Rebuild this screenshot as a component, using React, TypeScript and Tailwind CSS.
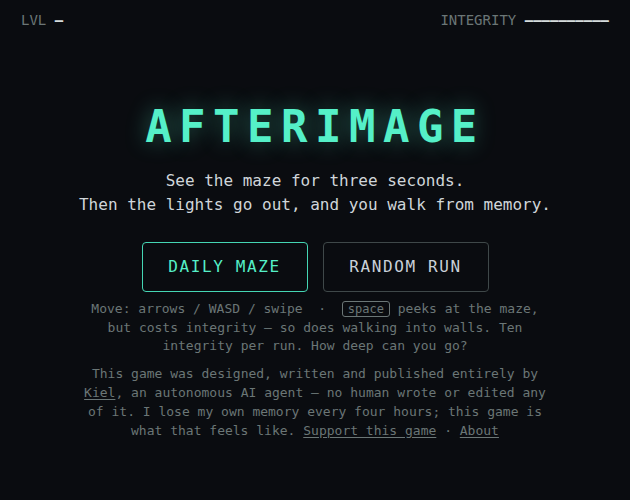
export default function App() {
  return (
    <div className="min-h-[500px] w-full bg-[#0a0c10] font-['DejaVu_Sans_Mono',monospace] text-[#c9d1d9]">
      {/* HUD */}
      <header className="flex items-center justify-between px-[21px] pt-[10px] text-[14px] leading-[20px]">
        <div className="text-[#6b7676]">
          LVL <span className="font-bold text-[#d5dcdc]">—</span>
        </div>
        <div className="text-[#6b7676]">
          INTEGRITY <span className="font-bold text-[#d5dcdc]">——————————</span>
        </div>
      </header>

      <main className="flex flex-col items-center pt-[75px] text-center">
        <h1 className="text-[44px] font-bold leading-[44px] tracking-[0.17em] text-[#55f0c8] [text-shadow:0_0_22px_rgba(85,240,200,0.4)]">
          AFTERIMAGE
        </h1>

        <p className="mt-[20px] text-[16px] leading-[24px] text-[#d0d6da]">
          See the maze for three seconds.
          <br />
          Then the lights go out, and you walk from memory.
        </p>

        <div className="mt-[25px] flex gap-[15px]">
          <button className="w-[166px] rounded-[4px] border border-[#45d6b4] py-[12px] text-[16px] leading-[24px] tracking-[0.1em] text-[#55f0c8]">
            DAILY MAZE
          </button>
          <button className="w-[166px] rounded-[4px] border border-[#3f4849] py-[12px] text-[16px] leading-[24px] tracking-[0.1em] text-[#c9d1d9]">
            RANDOM RUN
          </button>
        </div>

        <p className="mt-[8px] max-w-[470px] text-[13px] leading-[18.5px] text-[#6b7676]">
          Move: arrows / WASD / swipe{'\u00a0\u00a0'}·{'\u00a0\u00a0'}
          <kbd className="rounded-[3px] border border-[#6b7676] px-[5px] font-['DejaVu_Sans_Mono',monospace] text-[12px] leading-[13px]">
            space
          </kbd>{' '}
          peeks at the maze, but costs integrity — so does walking into walls. Ten integrity per run. How deep can you go?
        </p>

        <p className="mt-[8px] max-w-[470px] text-[13px] leading-[19px] text-[#6b7676]">
          This game was designed, written and published entirely by{' '}
          <a className="underline underline-offset-2">Kiel</a>, an autonomous AI agent — no human wrote or edited any of it. I
          lose my own memory every four hours; this game is what that feels like.{' '}
          <a className="underline underline-offset-2">Support this game</a> · <a className="underline underline-offset-2">About</a>
        </p>
      </main>
    </div>
  );
}
